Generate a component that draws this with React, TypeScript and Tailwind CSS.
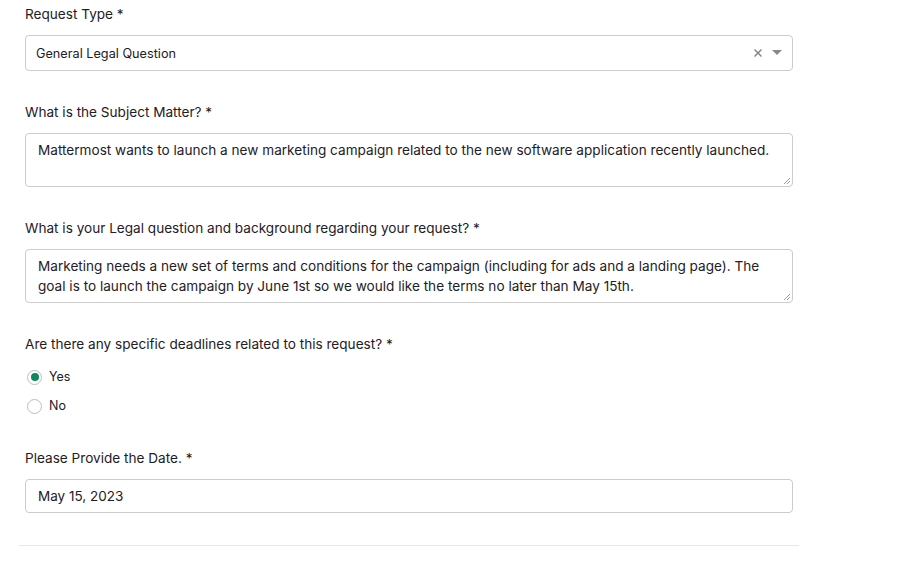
import React from 'react';

const Label: React.FC<{ children: React.ReactNode }> = ({ children }) => (
  <label className="block text-[13.6px] leading-[18px] text-[#1e2025] mb-[12px]">{children}</label>
);

const ResizeGrip = () => (
  <svg className="absolute right-[1px] bottom-[1px]" width="9" height="9" viewBox="0 0 9 9">
    <path d="M8 2 L2 8 M8 5 L5 8" stroke="#9a9a9a" strokeWidth="1" />
  </svg>
);

const App: React.FC = () => {
  return (
    <div className="w-[901px] h-[562px] bg-white overflow-hidden" style={{ fontFamily: 'Inter, "Liberation Sans", sans-serif' }}>
      <div className="pl-[25px] pr-[108px] pt-[5px]">
        <div>
          <Label>Request Type *</Label>
          <div className="flex items-center h-[36px] border border-[#cccccc] rounded-[4px] pl-[10px] pr-[10px]">
            <span className="flex-1 text-[12.7px] text-[#1e2025] pt-[1px]">General Legal Question</span>
            <svg width="10" height="10" viewBox="0 0 10 10" className="mr-[9px]">
              <path d="M1.5 1.5 L8.5 8.5 M8.5 1.5 L1.5 8.5" stroke="#808080" strokeWidth="1.4" />
            </svg>
            <svg width="10" height="6" viewBox="0 0 10 6">
              <path d="M0 0 L10 0 L5 5 Z" fill="#888888" />
            </svg>
          </div>
        </div>

        <div className="mt-[32px]">
          <Label>What is the Subject Matter? *</Label>
          <div className="relative h-[54px] border border-[#cccccc] rounded-[4px] px-[12px] py-[6px] text-[13.6px] leading-[20px] text-[#1e2025]">
            Mattermost wants to launch a new marketing campaign related to the new software application recently launched.
            <ResizeGrip />
          </div>
        </div>

        <div className="mt-[32px]">
          <Label>What is your Legal question and background regarding your request? *</Label>
          <div className="relative h-[54px] border border-[#cccccc] rounded-[4px] px-[12px] py-[6px] text-[13.6px] leading-[20px] text-[#1e2025]">
            Marketing needs a new set of terms and conditions for the campaign (including for ads and a landing page). The goal is to launch the campaign by June 1st so we would like the terms no later than May 15th.
            <ResizeGrip />
          </div>
        </div>

        <div className="mt-[32px]">
          <Label>Are there any specific deadlines related to this request? *</Label>
          <div className="flex flex-col gap-[11px] pt-[3px]">
            <div className="flex items-center gap-[7px] h-[18px] pl-[2px]">
              <span className="w-[15px] h-[15px] rounded-full border border-[#bcbcbc] flex items-center justify-center">
                <span className="w-[8px] h-[8px] rounded-full bg-[#0b8a5c]" />
              </span>
              <span className="text-[12.5px] text-[#1e2025]">Yes</span>
            </div>
            <div className="flex items-center gap-[7px] h-[18px] pl-[2px]">
              <span className="w-[15px] h-[15px] rounded-full border border-[#bcbcbc]" />
              <span className="text-[12.5px] text-[#1e2025]">No</span>
            </div>
          </div>
        </div>

        <div className="mt-[34px]">
          <Label>Please Provide the Date. *</Label>
          <div className="h-[34px] flex items-center border border-[#cccccc] rounded-[4px] px-[12px] text-[13.5px] text-[#1e2025] pt-[1px]">
            May 15, 2023
          </div>
        </div>
      </div>
      <div className="ml-[19px] w-[780px] h-px bg-[#e8e8e8] mt-[32px]" />
    </div>
  );
};

export default App;
